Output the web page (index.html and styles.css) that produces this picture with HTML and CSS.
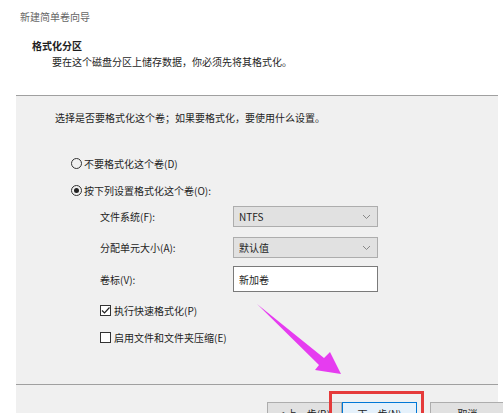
FILE: index.html
```html
<!DOCTYPE html>
<html lang="zh-CN">
<head>
    <meta charset="UTF-8">
    <title>新建简单卷向导</title>
    <link rel="stylesheet" href="styles.css">
</head>
<body>

<div class="wizard">
    <div class="header">
        <div class="title">新建简单卷向导</div>
        <div class="heading">格式化分区</div>
        <div class="subtitle">要在这个磁盘分区上储存数据，你必须先将其格式化。</div>
    </div>

    <div class="panel">
        <div class="content">
            <div class="intro">选择是否要格式化这个卷；如果要格式化，要使用什么设置。</div>

            <div class="option first"><span class="radio"></span>不要格式化这个卷(D)</div>
            <div class="option"><span class="radio checked"></span>按下列设置格式化这个卷(O):</div>

            <div class="fields">
                <div class="field">
                    <span class="label">文件系统(F):</span>
                    <span class="select">NTFS
                        <svg class="chevron" width="9" height="6" viewBox="0 0 9 6"><path d="M1 1 L4.5 4.5 L8 1" fill="none" stroke="#888" stroke-width="1"/></svg>
                    </span>
                </div>
                <div class="field">
                    <span class="label">分配单元大小(A):</span>
                    <span class="select">默认值
                        <svg class="chevron" width="9" height="6" viewBox="0 0 9 6"><path d="M1 1 L4.5 4.5 L8 1" fill="none" stroke="#888" stroke-width="1"/></svg>
                    </span>
                </div>
                <div class="field tall">
                    <span class="label">卷标(V):</span>
                    <span class="input">新加卷</span>
                </div>
            </div>

            <div class="check first">
                <span class="box">
                    <svg width="11" height="11" viewBox="0 0 11 11"><path d="M2 5.5 L4.5 8 L9.5 2.5" fill="none" stroke="#222" stroke-width="1.2"/></svg>
                </span>执行快速格式化(P)
            </div>
            <div class="check"><span class="box"></span>启用文件和文件夹压缩(E)</div>
        </div>

        <div class="footer">
            <button class="btn">&lt; 上一步(B)</button>
            <button class="btn primary">下一步(N)</button>
            <button class="btn cancel">取消</button>
        </div>
    </div>

    <div class="highlight"></div>
    <svg class="arrow" width="503" height="413" viewBox="0 0 503 413">
        <polygon points="257,304 324,358 330,352 341,374 315,370 319,365" fill="#e63cf0"/>
    </svg>
</div>

</body>
</html>
```

FILE: styles.css
```css
body {
    margin: 0;
    padding: 0;
    background-color: #fff;
    font-family: "Noto Sans CJK SC", "Liberation Sans", sans-serif;
    font-size: 10px;
    color: #1e1e1e;
}
.wizard {
    position: relative;
    width: 503px;
    height: 413px;
    overflow: hidden;
}
.header {
    height: 95px;
}
.header .title {
    padding: 11px 0 0 20px;
    line-height: 12px;
    color: #666;
}
.header .heading {
    margin-top: 17px;
    padding-left: 32px;
    line-height: 12px;
    font-weight: bold;
}
.header .subtitle {
    margin-top: 4px;
    padding-left: 52px;
    line-height: 12px;
}
.panel {
    margin-left: 16px;
    width: 482px;
    height: 318px;
    background-color: #f0f0f0;
    border-top: 1px solid #a0a0a0;
}
.content {
    height: 288px;
    padding-left: 39px;
}
.intro {
    padding-top: 16px;
    line-height: 12px;
}
.option {
    display: flex;
    align-items: center;
    margin-top: 15px;
    padding-left: 16px;
    height: 12px;
}
.option.first {
    margin-top: 33px;
}
.radio {
    box-sizing: border-box;
    width: 11px;
    height: 11px;
    border: 1px solid #333;
    border-radius: 50%;
    margin-right: 2px;
    display: flex;
    align-items: center;
    justify-content: center;
}
.radio.checked::after {
    content: "";
    width: 5px;
    height: 5px;
    border-radius: 50%;
    background-color: #222;
}
.fields {
    margin-top: 10px;
    padding-left: 45px;
}
.field {
    display: flex;
    align-items: center;
    height: 21px;
    margin-bottom: 10px;
}
.field.tall {
    height: 26px;
    margin-top: -2px;
}
.field .label {
    width: 133px;
}
.select, .input {
    position: relative;
    box-sizing: border-box;
    width: 145px;
    height: 100%;
    display: flex;
    align-items: center;
    padding-left: 5px;
}
.select {
    background-color: #e1e1e1;
    border: 1px solid #adadad;
}
.input {
    background-color: #fff;
    border: 1px solid #7a7a7a;
    align-items: flex-start;
    padding-top: 5px;
}
.chevron {
    position: absolute;
    right: 6px;
    top: 7px;
}
.check {
    display: flex;
    align-items: center;
    height: 12px;
    margin-top: 15px;
    padding-left: 45px;
}
.check.first {
    margin-top: 12px;
}
.check .box {
    box-sizing: border-box;
    width: 11px;
    height: 11px;
    border: 1px solid #333;
    margin-right: 3px;
    display: flex;
    background-color: #fff;
}
.check .box svg {
    margin: -1px;
}
.footer {
    border-top: 1px solid #a0a0a0;
    display: flex;
    padding: 17px 0 0 251px;
}
.btn {
    box-sizing: border-box;
    width: 75px;
    height: 22px;
    flex-shrink: 0;
    border: 1px solid #adadad;
    background-color: #e1e1e1;
    font-family: "Noto Sans CJK SC", sans-serif;
    font-size: 10px;
    color: #1e1e1e;
    padding: 0;
    margin: 0;
}
.btn.primary {
    border-color: #0078d7;
    background-color: #e5f1fb;
}
.btn.cancel {
    margin-left: 13px;
}
.highlight {
    position: absolute;
    left: 329px;
    top: 391px;
    width: 89px;
    height: 30px;
    border: 3px solid #e53a3a;
}
.arrow {
    position: absolute;
    left: 0;
    top: 0;
    pointer-events: none;
}
```
